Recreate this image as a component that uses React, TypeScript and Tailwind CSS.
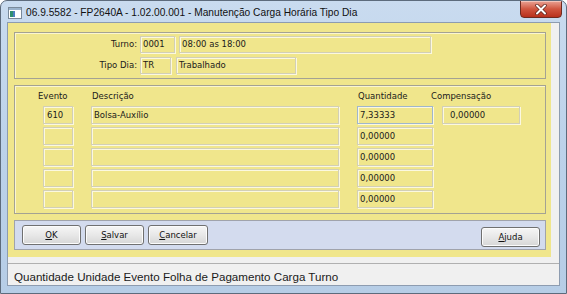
import React from 'react';

const ui = { fontFamily: '"DejaVu Sans", Verdana, sans-serif' };

function Field({ w, text = '', pl = 'pl-[2px]', focus = false }: { w: string; text?: string; pl?: string; focus?: boolean }) {
  return (
    <div
      className={`${w} h-full flex items-center ${pl} border ${focus ? 'border-[#9fb6cc]' : 'border-[#d2cfb6]'} shadow-[inset_1px_1px_0_#fbf8e0,1px_1px_0_#fbf8e0] text-[8.5px] text-[#1a1a1a] leading-none`}
    >
      {text}
    </div>
  );
}

function Btn({ k, rest, w }: { k: string; rest: string; w: string }) {
  return (
    <button
      className={`${w} h-[20px] rounded-[3px] border border-[#707070] bg-gradient-to-b from-[#f6f6f6] via-[#e8e8e8] to-[#d6d6d6] shadow-[inset_0_0_0_1px_#fcfcfc] text-[8.5px] text-[#111] leading-none`}
      style={ui}
    >
      <span className="underline">{k}</span>
      {rest}
    </button>
  );
}

const rows = [
  { ev: '610', desc: 'Bolsa-Auxílio', qt: '7,33333', comp: '0,00000' },
  { ev: '', desc: '', qt: '0,00000' },
  { ev: '', desc: '', qt: '0,00000' },
  { ev: '', desc: '', qt: '0,00000' },
  { ev: '', desc: '', qt: '0,00000' },
];

export default function App() {
  return (
    <div className="w-[567px] h-[294px] bg-white">
      <div className="w-[567px] h-[294px] flex flex-col rounded-t-[7px] border border-[#5d6b7c] bg-gradient-to-b from-[#c9dbef] via-[#bcd2ea] to-[#b6cde6] overflow-hidden">
        {/* title bar */}
        <div className="h-[21px] flex items-start shrink-0">
          <svg width="14" height="12" viewBox="0 0 14 12" className="ml-[7px] mt-[6px]">
            <rect x="0.5" y="0.5" width="13" height="11" fill="#fff" stroke="#7a8a9a" />
            <rect x="1" y="1" width="12" height="2" fill="#9bb3cc" />
            <rect x="2" y="4" width="3" height="6" fill="#2f8f6f" />
            <rect x="5" y="4" width="2" height="6" fill="#4d7fc0" />
          </svg>
          <div className="ml-[4px] mt-[5px] text-[10.2px] leading-[13px] text-[#111] whitespace-nowrap" style={{ fontFamily: '"Liberation Sans", Arial, sans-serif' }}>
            06.9.5582 - FP2640A - 1.02.00.001 - Manutenção Carga Horária Tipo Dia
          </div>
          <div className="ml-auto mr-[4px] w-[42px] h-[18px] -mt-px rounded-b-[4px] border border-[#6e2a20] bg-gradient-to-b from-[#e9a294] via-[#d0553f] to-[#b8301c] flex items-center justify-center shadow-[inset_0_1px_0_#f3c4ba]">
            <svg width="12" height="11" viewBox="0 0 12 11">
              <path d="M2 1.5 L10 9.5 M10 1.5 L2 9.5" stroke="#5a2018" strokeWidth="3.4" strokeLinecap="round" />
              <path d="M2 1.5 L10 9.5 M10 1.5 L2 9.5" stroke="#ffffff" strokeWidth="2" strokeLinecap="round" />
            </svg>
          </div>
        </div>

        {/* client */}
        <div className="mx-[6px] h-[264px] flex flex-col bg-[#f0f0f0] border border-[#8d9cb0]">
          <div className="mr-[8px] h-[235px] bg-[#f0e68c] flex flex-col pl-[6px] pr-[5px] pt-[9px]" style={ui}>
            {/* group 1 */}
            <div className="h-[47px] border border-[#a4a293] shadow-[inset_1px_1px_0_#fbf6d0] flex flex-col pt-[3px] gap-[4px] text-[8.5px] text-[#1a1a1a]">
              <div className="h-[17px] flex items-center">
                <div className="w-[123px] text-right pr-[1px]">Turno:</div>
                <div className="ml-[2px] h-full flex gap-[4px]">
                  <Field w="w-[35px]" text="0001" />
                  <Field w="w-[252px]" text="08:00 as 18:00" />
                </div>
              </div>
              <div className="h-[17px] flex items-center">
                <div className="w-[123px] text-right pr-[1px]">Tipo Dia:</div>
                <div className="ml-[2px] h-full flex gap-[5px]">
                  <Field w="w-[31px]" text="TR" />
                  <Field w="w-[120px]" text="Trabalhado" />
                </div>
              </div>
            </div>

            {/* group 2 */}
            <div className="mt-[6px] h-[129px] border border-[#a4a293] shadow-[inset_1px_1px_0_#fbf6d0] flex flex-col pt-[4px] text-[8.5px] text-[#1a1a1a]">
              <div className="h-[12px] flex items-center pl-[23px] leading-none">
                <div className="w-[54px]">Evento</div>
                <div className="w-[266px]">Descrição</div>
                <div className="w-[73px]">Quantidade</div>
                <div>Compensação</div>
              </div>
              <div className="mt-[4px] flex flex-col gap-[3px]">
                {rows.map((r, i) => (
                  <div key={i} className="h-[18px] flex pl-[28px]">
                    <Field w="w-[30px]" text={r.ev} pl="pl-[3px]" />
                    <div className="ml-[18px]">
                      <Field w="w-[248px]" text={r.desc} />
                    </div>
                    <div className="ml-[18px]">
                      <Field w="w-[76px]" text={r.qt} focus={i === 0} />
                    </div>
                    {r.comp && (
                      <div className="ml-[9px]">
                        <Field w="w-[78px]" text={r.comp} pl="pl-[7px]" />
                      </div>
                    )}
                  </div>
                ))}
              </div>
            </div>

            {/* buttons */}
            <div className="mt-[6px] h-[30px] border border-[#a0a3ab] bg-[#d3dbee] flex items-center pl-[7px] pr-[5px] gap-[4px]">
              <Btn k="O" rest="K" w="w-[59px]" />
              <Btn k="S" rest="alvar" w="w-[59px]" />
              <Btn k="C" rest="ancelar" w="w-[60px]" />
              <div className="ml-auto">
                <Btn k="A" rest="juda" w="w-[59px]" />
              </div>
            </div>
          </div>

          <div className="mt-[6px] flex-1 border-t border-[#b0b0b0] bg-[#f0f0f0] flex items-center pl-[6px] pt-[4px]">
            <span className="text-[11.6px] text-[#1a1a1a] whitespace-nowrap" style={{ fontFamily: '"Liberation Sans", Arial, sans-serif' }}>
              Quantidade Unidade Evento Folha de Pagamento Carga Turno
            </span>
          </div>
        </div>
      </div>
    </div>
  );
}
